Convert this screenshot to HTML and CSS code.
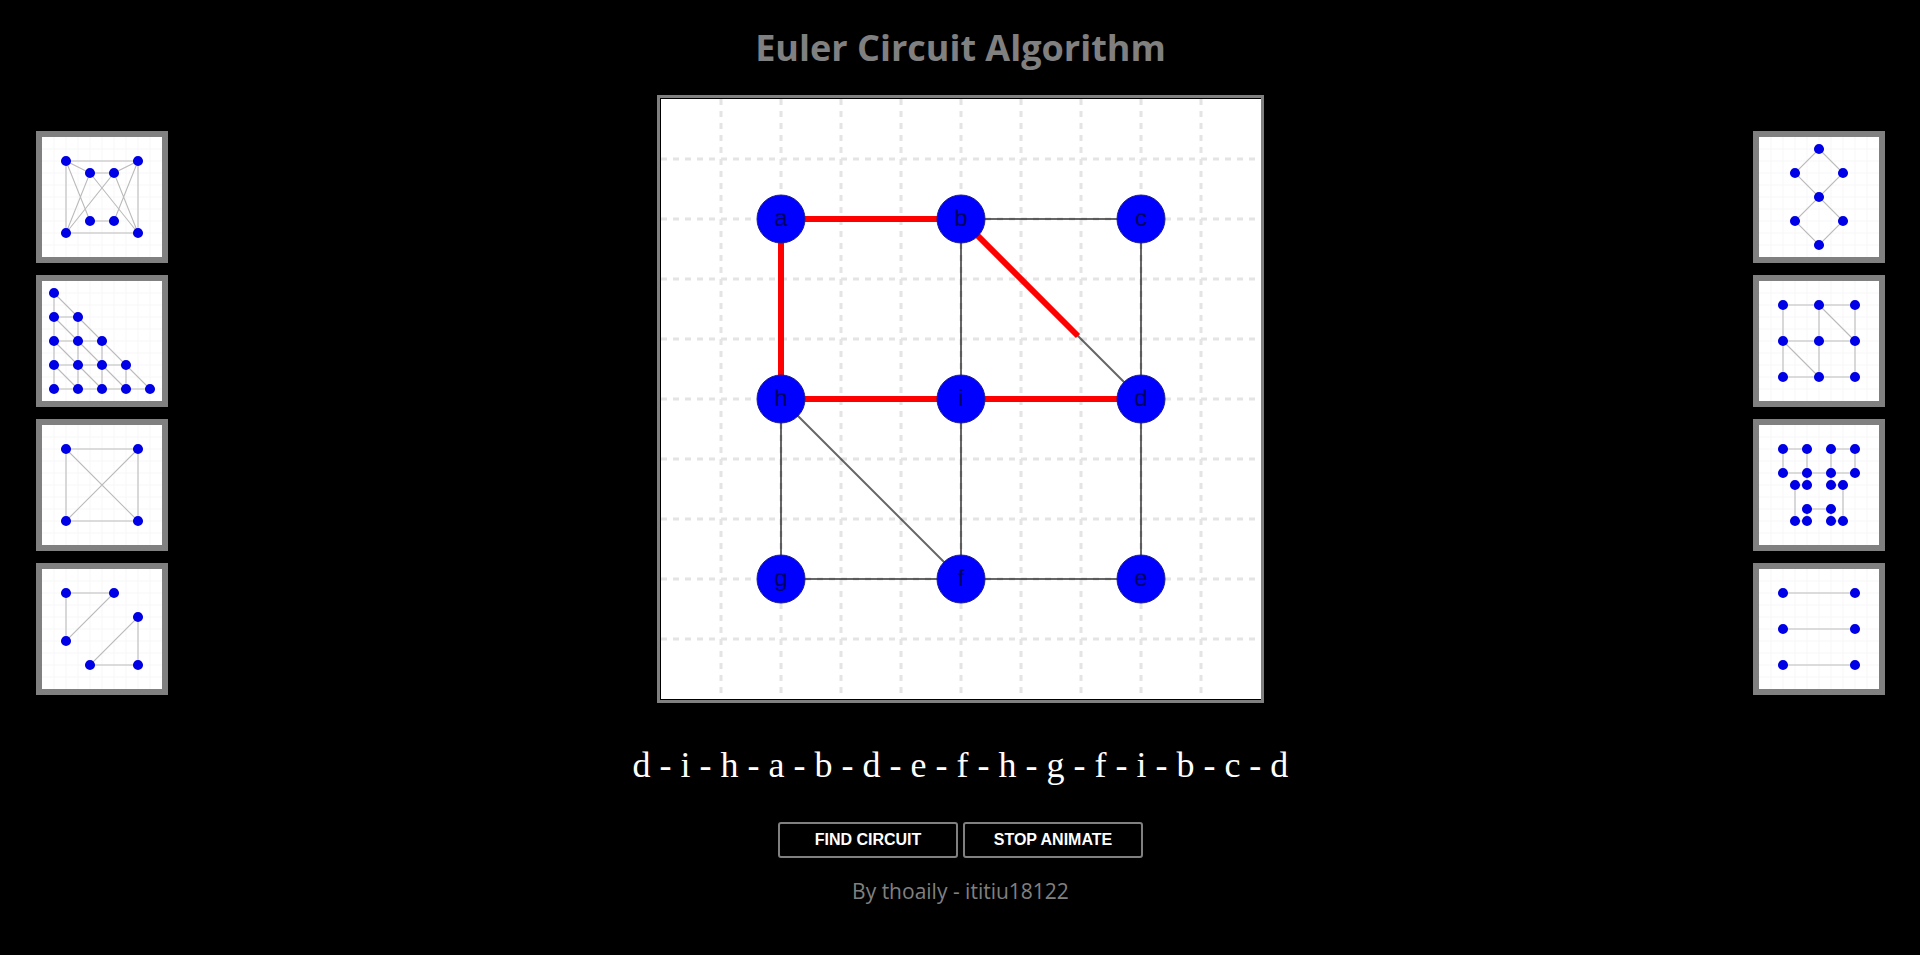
FILE: index.html
```
<!DOCTYPE html>
<html lang="en">
<head>
<meta charset="utf-8">
<meta name="viewport" content="width=device-width, initial-scale=1">
<title>Euler Circuit Algorithm</title>
<link rel="stylesheet" href="styles.css">
</head>
<body>
<svg class="defs" width="0" height="0" aria-hidden="true">
  <defs>
    <path id="grid" d="M1 0V10M2 0V10M3 0V10M4 0V10M5 0V10M6 0V10M7 0V10M8 0V10M9 0V10M0 1H10M0 2H10M0 3H10M0 4H10M0 5H10M0 6H10M0 7H10M0 8H10M0 9H10"/>
  </defs>
</svg>
<div class="page">
  <nav class="samples" aria-label="Sample graphs, left">
    <button class="sample" aria-label="Sample 1"><svg viewBox="0 0 10 10"><use href="#grid" class="mini-grid"/>
      <path class="mini-edges" d="M2 2H8V8H2ZM4 3H6M4 7H6M2 2L4 3L2 8L6 3L8 2M4 3L8 8L6 3M2 2L4 7M8 2L6 7"/>
      <path class="mini-nodes" d="M2 2h0M8 2h0M8 8h0M2 8h0M4 3h0M6 3h0M4 7h0M6 7h0"/></svg></button>
    <button class="sample" aria-label="Sample 2"><svg viewBox="0 0 10 10"><use href="#grid" class="mini-grid"/>
      <path class="mini-edges" d="M1 1V9H9L1 1M1 3H3V9M1 5H5V9M1 7H7V9M1 3L7 9M1 5L5 9M1 7L3 9"/>
      <path class="mini-nodes" d="M1 1h0M1 3h0M3 3h0M1 5h0M3 5h0M5 5h0M1 7h0M3 7h0M5 7h0M7 7h0M1 9h0M3 9h0M5 9h0M7 9h0M9 9h0"/></svg></button>
    <button class="sample" aria-label="Sample 3"><svg viewBox="0 0 10 10"><use href="#grid" class="mini-grid"/>
      <path class="mini-edges" d="M2 2H8V8H2ZM2 2L8 8M8 2L2 8"/>
      <path class="mini-nodes" d="M2 2h0M8 2h0M8 8h0M2 8h0"/></svg></button>
    <button class="sample" aria-label="Sample 4"><svg viewBox="0 0 10 10"><use href="#grid" class="mini-grid"/>
      <path class="mini-edges" d="M2 2H6L2 6ZM8 4V8H4Z"/>
      <path class="mini-nodes" d="M2 2h0M6 2h0M2 6h0M8 4h0M8 8h0M4 8h0"/></svg></button>
  </nav>

  <main class="stage">
    <h1 class="title">Euler Circuit Algorithm</h1>
    <div class="board">
      <svg viewBox="0 0 600 600" role="img" aria-label="Graph with nodes a to i">
        <path class="grid-lines" d="M60 0V600M120 0V600M180 0V600M240 0V600M300 0V600M360 0V600M420 0V600M480 0V600M540 0V600M0 60H600M0 120H600M0 180H600M0 240H600M0 300H600M0 360H600M0 420H600M0 480H600M0 540H600"/>
        <path class="edges" d="M120 120H480V480H120ZM300 120V480M120 300H480M300 120L480 300M120 300L300 480"/>
        <path class="trail" d="M480 300H120V120H300L417 237"/>
        <g class="nodes">
          <circle cx="120" cy="120" r="24"/><circle cx="300" cy="120" r="24"/><circle cx="480" cy="120" r="24"/>
          <circle cx="120" cy="300" r="24"/><circle cx="300" cy="300" r="24"/><circle cx="480" cy="300" r="24"/>
          <circle cx="120" cy="480" r="24"/><circle cx="300" cy="480" r="24"/><circle cx="480" cy="480" r="24"/>
        </g>
        <g class="names">
          <text x="120" y="127">a</text><text x="300" y="127">b</text><text x="480" y="127">c</text>
          <text x="120" y="307">h</text><text x="300" y="307">i</text><text x="480" y="307">d</text>
          <text x="120" y="487">g</text><text x="300" y="487">f</text><text x="480" y="487">e</text>
        </g>
      </svg>
    </div>
    <p class="circuit">d - i - h - a - b - d - e - f - h - g - f - i - b - c - d</p>
    <div class="actions">
      <button class="action">FIND CIRCUIT</button>
      <button class="action">STOP ANIMATE</button>
    </div>
    <footer class="credit">By thoaily - ititiu18122</footer>
  </main>

  <nav class="samples" aria-label="Sample graphs, right">
    <button class="sample" aria-label="Sample 5"><svg viewBox="0 0 10 10"><use href="#grid" class="mini-grid"/>
      <path class="mini-edges" d="M5 1L7 3L3 7L5 9L7 7L3 3Z"/>
      <path class="mini-nodes" d="M5 1h0M3 3h0M7 3h0M5 5h0M3 7h0M7 7h0M5 9h0"/></svg></button>
    <button class="sample" aria-label="Sample 6"><svg viewBox="0 0 10 10"><use href="#grid" class="mini-grid"/>
      <path class="mini-edges" d="M2 2H8V8H2ZM5 2V8M2 5H8M5 2L8 5M2 5L5 8"/>
      <path class="mini-nodes" d="M2 2h0M5 2h0M8 2h0M2 5h0M5 5h0M8 5h0M2 8h0M5 8h0M8 8h0"/></svg></button>
    <button class="sample" aria-label="Sample 7"><svg viewBox="0 0 10 10"><use href="#grid" class="mini-grid"/>
      <path class="mini-edges" d="M2 2H4V5H3V8H4V7H6V8H7V5H6V2H8V4H2Z"/>
      <path class="mini-nodes" d="M2 2h0M4 2h0M6 2h0M8 2h0M2 4h0M4 4h0M6 4h0M8 4h0M3 5h0M4 5h0M6 5h0M7 5h0M4 7h0M6 7h0M3 8h0M4 8h0M6 8h0M7 8h0"/></svg></button>
    <button class="sample" aria-label="Sample 8"><svg viewBox="0 0 10 10"><use href="#grid" class="mini-grid"/>
      <path class="mini-edges" d="M2 2H8M2 5H8M2 8H8"/>
      <path class="mini-nodes" d="M2 2h0M8 2h0M2 5h0M8 5h0M2 8h0M8 8h0"/></svg></button>
  </nav>
</div>
</body>
</html>
```
FILE: styles.css
```
* {
  box-sizing: border-box;
}

body {
  margin: 0;
  background: #000;
  color: #808080;
}

svg {
  display: block;
}

.defs {
  position: absolute;
}

.page {
  display: flex;
  justify-content: space-between;
  align-items: flex-start;
  padding: 24px 35px 24px 36px;
}

.samples {
  display: flex;
  flex-direction: column;
  gap: 12px;
  padding-top: 107px;
}

.sample {
  width: 132px;
  padding: 0;
  border: 6px solid #808080;
  background: #fff;
  cursor: pointer;
}

.mini-grid,
.mini-edges,
.mini-nodes {
  fill: none;
}

.mini-grid {
  stroke: #f8f8f8;
  stroke-width: 0.1;
}

.mini-edges {
  stroke: #bbb;
  stroke-width: 0.09;
}

.mini-nodes {
  stroke: #0000e6;
  stroke-width: 0.84;
  stroke-linecap: round;
}

.stage {
  display: flex;
  flex-direction: column;
  align-items: center;
}

.title {
  margin: 0 0 23px;
  font: 700 36px/48px "Open Sans", sans-serif;
}

.board {
  width: 607px;
  max-width: 100%;
  padding: 1px 0 1px 1px;
  border: 3px solid #808080;
}

.board svg {
  width: 100%;
  background: #fff;
}

.grid-lines {
  fill: none;
  stroke: #e4e4e4;
  stroke-width: 3;
  stroke-dasharray: 6 6;
}

.edges {
  fill: none;
  stroke: rgba(0, 0, 0, 0.6);
  stroke-width: 2;
}

.trail {
  fill: none;
  stroke: #f00;
  stroke-width: 6;
}

.nodes {
  fill: #00f;
  stroke: #1c1c90;
  stroke-width: 1;
}

.names {
  fill: #000060;
  font: 24px "Liberation Sans", Arial, sans-serif;
  text-anchor: middle;
}

.circuit {
  margin: 40px 0 35px;
  color: #fff;
  font: 36px/44px "Liberation Serif", "Times New Roman", serif;
}

.actions {
  display: flex;
  gap: 5px;
}

.action {
  width: 180px;
  height: 36px;
  padding: 0;
  border: 2px solid #808080;
  border-radius: 3px;
  background: #000;
  color: #fff;
  font: bold 16px "Liberation Sans", Arial, sans-serif;
  cursor: pointer;
}

.credit {
  margin-top: 18px;
  font: 21px/30px "Open Sans", sans-serif;
}
```
